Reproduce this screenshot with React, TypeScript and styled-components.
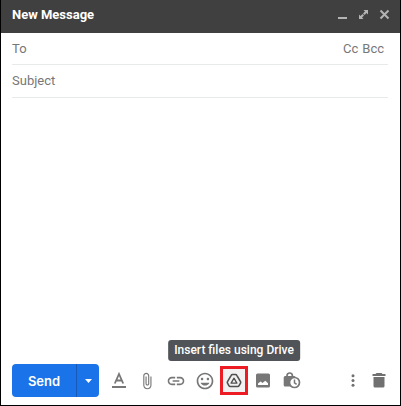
import React from "react";
import styled, { createGlobalStyle } from "styled-components";

const GlobalStyle = createGlobalStyle`
  *, *::before, *::after { box-sizing: border-box; }
  body { margin: 0; background: #fff; font-family: Roboto, sans-serif; }
  button, input, textarea { font-family: inherit; margin: 0; }
`;

const ComposeWindow = styled.form`
  display: flex;
  flex-direction: column;
  min-height: 100vh;
  border: solid #000;
  border-width: 0 1px 1px;
  background: #fff;
`;

const TitleBar = styled.header`
  display: flex;
  align-items: center;
  justify-content: space-between;
  height: 33px;
  padding: 0 8px 4px 11px;
  background: #404040;
`;

const Title = styled.h1`
  margin: 0;
  font-size: 13px;
  line-height: 16px;
  font-weight: 700;
  color: #fff;
`;

const WindowActions = styled.div`
  display: flex;
  gap: 6px;
`;

const PlainButton = styled.button`
  display: flex;
  align-items: center;
  justify-content: center;
  padding: 0;
  border: 0;
  background: transparent;
  cursor: pointer;
`;

const WindowButton = styled(PlainButton)`
  width: 15px;
  height: 15px;
  color: #b4b4b4;
`;

const Field = styled.div`
  display: flex;
  align-items: center;
  height: 32px;
  margin: 0 12px 0 11px;
  border-bottom: 1px solid #e8eaea;
  font-size: 13px;
  line-height: 16px;
  color: #777;
`;

const SubjectField = styled(Field)`
  height: 33px;
`;

const FieldInput = styled.input`
  flex: 1;
  min-width: 0;
  padding: 0 8px;
  border: 0;
  outline: 0;
  background: transparent;
  font-size: 13px;
  color: #222;
`;

const CopyLinks = styled.div`
  display: flex;
  gap: 4px;
  padding-right: 4px;
`;

const CopyButton = styled(PlainButton)`
  font-size: 13px;
  line-height: 16px;
  color: #777;
`;

const MessageBody = styled.textarea`
  flex: 1;
  margin: 0 12px 0 11px;
  padding: 8px 0;
  border: 0;
  outline: 0;
  resize: none;
  font-size: 13px;
`;

const Toolbar = styled.footer`
  display: flex;
  align-items: center;
  padding: 0 11px 8px;
`;

const SendGroup = styled.div`
  display: flex;
  height: 33px;
  border-radius: 4px;
  overflow: hidden;
  background: #1a73e8;
`;

const SendButton = styled(PlainButton)`
  width: 64px;
  font-size: 13px;
  font-weight: 600;
  font-family: Inter, Roboto, sans-serif;
  color: #fff;
`;

const SendOptions = styled(PlainButton)`
  width: 23px;
  border-left: 1px solid #1659b8;
  color: #fff;
`;

const Tools = styled.div`
  display: flex;
  align-items: center;
  gap: 1px;
  margin-left: 5px;
`;

const ToolSlot = styled.div`
  position: relative;
`;

const ToolButton = styled(PlainButton)<{ $active?: boolean }>`
  width: 28px;
  height: 29px;
  color: ${(p) => (p.$active ? "#505050" : "#777")};
  background: ${(p) => (p.$active ? "#f1f1f1" : "transparent")};
  border: ${(p) => (p.$active ? "3px solid #ed1c24" : "0")};
`;

const Tooltip = styled.span`
  position: absolute;
  bottom: 34px;
  left: 50%;
  transform: translateX(-50%);
  padding: 2px 6px 3px;
  border-radius: 3px;
  background: #505357;
  color: #fff;
  font-size: 12px;
  line-height: 16px;
  font-weight: 500;
  white-space: nowrap;
`;

const EndTools = styled.div`
  display: flex;
  align-items: center;
  margin-left: auto;
`;

const EndButton = styled(PlainButton)`
  width: 26px;
  height: 29px;
  color: #707070;

  &:last-child { margin-right: -3px; }
`;

const Glyph = ({ size = 20, d }: { size?: number; d: string }) => (
  <svg width={size} height={size} viewBox="0 0 24 24" fill="currentColor" aria-hidden="true">
    <path d={d} />
  </svg>
);

const paths = {
  clip: "M16.5 6v11.5c0 2.21-1.79 4-4 4s-4-1.79-4-4V5c0-1.38 1.12-2.5 2.5-2.5s2.5 1.12 2.5 2.5v10.5c0 .55-.45 1-1 1s-1-.45-1-1V6H10v9.5c0 1.38 1.12 2.5 2.5 2.5s2.5-1.12 2.5-2.5V5c0-2.21-1.79-4-4-4S7 2.79 7 5v12.5c0 3.04 2.46 5.5 5.5 5.5s5.5-2.46 5.5-5.5V6h-1.5z",
  link: "M3.9 12c0-1.71 1.39-3.1 3.1-3.1h4V7H7c-2.76 0-5 2.24-5 5s2.24 5 5 5h4v-1.9H7c-1.71 0-3.1-1.39-3.1-3.1zM8 13h8v-2H8v2zm9-6h-4v1.9h4c1.71 0 3.1 1.39 3.1 3.1s-1.39 3.1-3.1 3.1h-4V17h4c2.76 0 5-2.24 5-5s-2.24-5-5-5z",
  smile: "M11.99 2C6.47 2 2 6.48 2 12s4.47 10 9.99 10C17.52 22 22 17.52 22 12S17.52 2 11.99 2zM12 20c-4.42 0-8-3.58-8-8s3.58-8 8-8 8 3.58 8 8-3.58 8-8 8zm3.5-9c.83 0 1.5-.67 1.5-1.5S16.33 8 15.5 8 14 8.67 14 9.5s.67 1.5 1.5 1.5zm-7 0c.83 0 1.5-.67 1.5-1.5S9.33 8 8.5 8 7 8.67 7 9.5 7.67 11 8.5 11zm-1.8 3c.8 2.04 2.88 3.5 5.3 3.5s4.5-1.46 5.3-3.5H6.7z",
};

export default function App() {
  return (
    <>
      <GlobalStyle />
      <ComposeWindow onSubmit={(e: React.FormEvent) => e.preventDefault()}>
        <TitleBar>
          <Title>New Message</Title>
          <WindowActions>
            <WindowButton type="button" aria-label="Minimize">
              <svg width="15" height="15" viewBox="0 0 15 15" aria-hidden="true">
                <path d="M3 10h9v2H3z" fill="currentColor" />
              </svg>
            </WindowButton>
            <WindowButton type="button" aria-label="Full screen">
              <svg width="15" height="15" viewBox="0 0 15 15" aria-hidden="true">
                <path d="M7.500 3H12v4.500l-1.500-1.500-2 2L7 6.500l2-2zM3 7.500L4.500 9l2-2L8 8.500l-2 2L7.500 12H3z" fill="currentColor" />
              </svg>
            </WindowButton>
            <WindowButton type="button" aria-label="Close">
              <svg width="15" height="15" viewBox="0 0 15 15" aria-hidden="true">
                <path d="M3.500 3.500l8 8M11.500 3.500l-8 8" stroke="currentColor" strokeWidth="2" />
              </svg>
            </WindowButton>
          </WindowActions>
        </TitleBar>

        <Field>
          <label htmlFor="to">To</label>
          <FieldInput id="to" type="text" />
          <CopyLinks>
            <CopyButton type="button">Cc</CopyButton>
            <CopyButton type="button">Bcc</CopyButton>
          </CopyLinks>
        </Field>
        <SubjectField>
          <label htmlFor="subject">Subject</label>
          <FieldInput id="subject" type="text" />
        </SubjectField>
        <MessageBody aria-label="Message body" />

        <Toolbar>
          <SendGroup>
            <SendButton type="submit">Send</SendButton>
            <SendOptions type="button" aria-label="More send options">
              <svg width="7" height="4" viewBox="0 0 7 4" aria-hidden="true">
                <path d="M0 0h7L3.500 4z" fill="currentColor" />
              </svg>
            </SendOptions>
          </SendGroup>
          <Tools>
            <ToolButton type="button" aria-label="Formatting options">
              <svg width="16" height="17" viewBox="0 0 16 17" fill="none" stroke="currentColor" aria-hidden="true">
                <path d="M4.800 11.500L9 2l4.200 9.500M6.200 8.500h5.600" strokeWidth="1.800" />
                <path d="M2 15h14" strokeWidth="2" />
              </svg>
            </ToolButton>
            <ToolButton type="button" aria-label="Attach files">
              <Glyph size={18} d={paths.clip} />
            </ToolButton>
            <ToolButton type="button" aria-label="Insert link">
              <Glyph d={paths.link} />
            </ToolButton>
            <ToolButton type="button" aria-label="Insert emoji">
              <Glyph d={paths.smile} />
            </ToolButton>
            <ToolSlot>
              <ToolButton type="button" $active aria-labelledby="drive-tip">
                <svg width="18" height="17" viewBox="0 0 18 17" fill="none" stroke="currentColor" strokeLinejoin="round" aria-hidden="true">
                  <path d="M7.500 2.500h3a1.500 1.500 0 0 1 1.300.800l3.700 6.400a1.500 1.500 0 0 1 0 1.500l-1.400 2.500a1.500 1.500 0 0 1-1.300.800H5.200a1.500 1.500 0 0 1-1.300-.800l-1.400-2.500a1.500 1.500 0 0 1 0-1.500l3.700-6.400a1.500 1.500 0 0 1 1.300-.800z" strokeWidth="1.600" />
                  <path d="M9 6.200l2.900 5H6.100z" strokeWidth="1.300" />
                </svg>
              </ToolButton>
              <Tooltip id="drive-tip" role="tooltip">Insert files using Drive</Tooltip>
            </ToolSlot>
            <ToolButton type="button" aria-label="Insert photo">
              <svg width="16" height="15" viewBox="0 0 16 15" aria-hidden="true">
                <rect x="1" y="0.500" width="14" height="14" rx="1.500" fill="currentColor" />
                <path d="M3 12v-1.500l2.600-2 1.900 1.500 2.800-2.300 2.700 2.500V12z" fill="#fff" />
              </svg>
            </ToolButton>
            <ToolButton type="button" aria-label="Toggle confidential mode">
              <svg width="18" height="17" viewBox="0 0 18 17" aria-hidden="true">
                <path d="M4 5V3.700a2.700 2.700 0 0 1 5.400 0V5" fill="none" stroke="currentColor" strokeWidth="1.700" />
                <path d="M2.200 4h9A1.500 1.500 0 0 1 12.700 5.500V14.500H2.200A1.500 1.500 0 0 1 .700 13V5.500A1.500 1.500 0 0 1 2.200 4z" fill="currentColor" />
                <circle cx="11.500" cy="10.500" r="5" fill="#fff" stroke="currentColor" strokeWidth="1.700" />
                <path d="M11.500 7.500v3.300l2.100 1.600" fill="none" stroke="currentColor" strokeWidth="1.500" />
              </svg>
            </ToolButton>
          </Tools>
          <EndTools>
            <EndButton type="button" aria-label="More options">
              <svg width="4" height="13" viewBox="0 0 4 13" fill="currentColor" aria-hidden="true">
                <circle cx="2" cy="1.700" r="1.500" />
                <circle cx="2" cy="6.500" r="1.500" />
                <circle cx="2" cy="11.300" r="1.500" />
              </svg>
            </EndButton>
            <EndButton type="button" aria-label="Discard draft">
              <svg width="14" height="15" viewBox="0 0 14 15" fill="currentColor" aria-hidden="true">
                <path d="M4.500 0h5l1 1H13.500v2H.500V1h3zM1.500 4h11v9a1.500 1.500 0 0 1-1.500 1.500H3A1.500 1.500 0 0 1 1.500 13z" />
              </svg>
            </EndButton>
          </EndTools>
        </Toolbar>
      </ComposeWindow>
    </>
  );
}
